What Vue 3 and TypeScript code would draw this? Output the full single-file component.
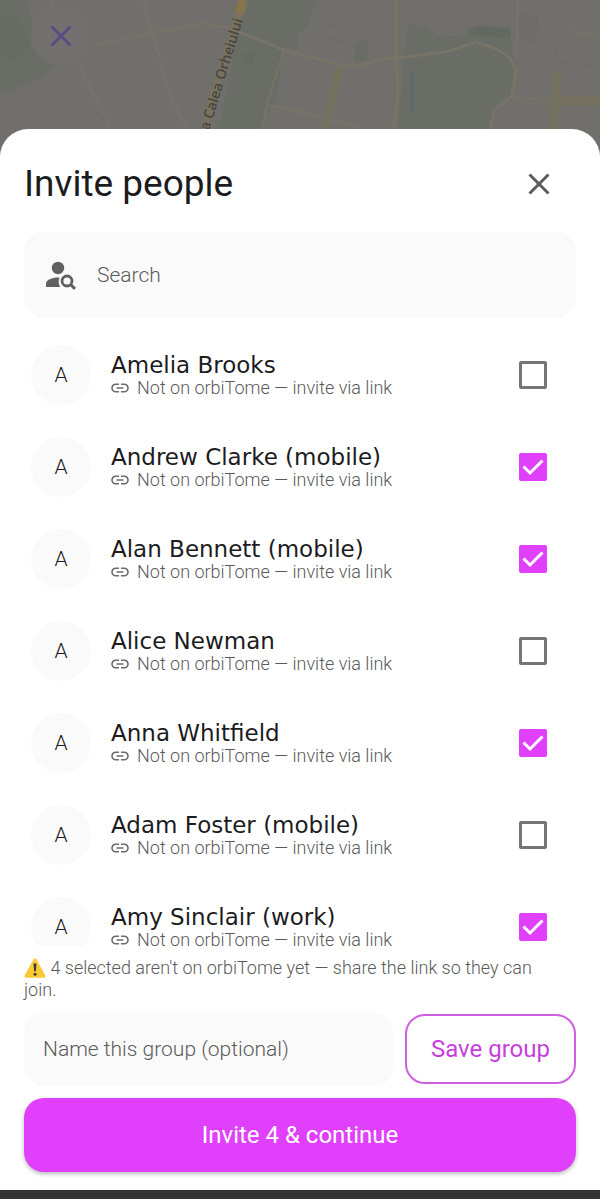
<script setup lang="ts">
import { computed, ref } from 'vue'

interface Contact {
  id: number
  name: string
  selected: boolean
}

const contacts = ref<Contact[]>([
  { id: 1, name: 'Amelia Brooks', selected: false },
  { id: 2, name: 'Andrew Clarke (mobile)', selected: true },
  { id: 3, name: 'Alan Bennett (mobile)', selected: true },
  { id: 4, name: 'Alice Newman', selected: false },
  { id: 5, name: 'Anna Whitfield', selected: true },
  { id: 6, name: 'Adam Foster (mobile)', selected: false },
  { id: 7, name: 'Amy Sinclair (work)', selected: true },
])

const query = ref('')
const groupName = ref('')

const visibleContacts = computed(() =>
  contacts.value.filter((c) => c.name.toLowerCase().includes(query.value.toLowerCase())),
)
const selectedCount = computed(() => contacts.value.filter((c) => c.selected).length)
</script>

<template>
  <div class="screen">
    <div class="map">
      <svg class="map-art" viewBox="0 0 600 170" preserveAspectRatio="xMidYMin slice" aria-hidden="true">
        <rect width="600" height="170" fill="#716f6c" />
        <g fill="#696d66">
          <path d="M0 0H26L32 20L30 42L44 58L60 64L36 80L0 96Z" />
          <path d="M250 0H316L309 24L298 34V50L284 48L276 98L262 124L256 170H212L226 92L238 30Z" />
          <path d="M408 24L422 26L438 35L466 37L470 28L480 25L510 28L512 50L516 66L512 96L496 106L490 130H398L404 60Z" />
          <path d="M356 42L369 40L367 61L354 62Z" />
        </g>
        <path d="M0 14L18 18L30 46L12 60L0 56Z" fill="#676c63" />
        <path d="M467 30L480 26L511 29L510 38L474 36Z" fill="#626960" />
        <path d="M244 54L254 52V64L243 65Z" fill="#646c62" />
        <path d="M520 14L538 16L536 42L520 38Z" fill="#6e6b68" />
        <g fill="none" stroke="#6e6b68" stroke-width="1">
          <path d="M44 92L58 120M62 88L74 122M100 104L106 128M116 96L126 126M132 92L142 124M148 90L156 116" />
          <path d="M312 20L342 28M318 36L346 42M332 6L340 46M540 60L596 66M556 48L560 94" />
        </g>
        <g fill="none" stroke="#777367" stroke-linejoin="round">
          <path d="M52 0L50 10M96 45L142 35L205 23L228 28" stroke-width="2" />
          <path d="M143 0L152 33L172 100L188 130M80 66L110 128" stroke-width="2" />
          <path d="M234 30L284 50L300 54L340 65H360L382 59L405 57L446 52L476 42L497 49L510 58L516 70L512 96L494 110L490 130" stroke-width="3" />
          <path d="M284 50L268 100L262 130M268 105L300 112L358 127" stroke-width="2" />
          <path d="M396 0V60L398 88L394 130" stroke-width="4" />
          <path d="M512 98L600 102M572 31L600 36M518 0L516 60" stroke-width="2" />
        </g>
        <g fill="none" stroke="#74715e">
          <path d="M340 66L334 90L325 128" stroke-width="8" />
          <path d="M557 72L554 130M550 101H600" stroke-width="9" />
          <path d="M243 0L228 48L213 96L204 134" stroke="#79725c" stroke-width="7" />
          <path d="M243 0L239 14" stroke="#86744a" stroke-width="9" />
        </g>
        <path d="M412 72V112" stroke="#5a6970" stroke-width="3" />
        <text class="street" transform="translate(209 131) rotate(-73)" fill="#494742">a Calea Orheiului</text>
      </svg>
      <button class="map-close" type="button" aria-label="Close map">
        <svg width="22" height="22" viewBox="0 0 22 22" aria-hidden="true">
          <path d="M1.500 1.500L20.500 20.500M20.500 1.500L1.500 20.500" stroke="#594c85" stroke-width="3" />
        </svg>
      </button>
    </div>

    <main class="sheet">
      <header class="header">
        <h1>Invite people</h1>
        <button class="icon-button" type="button" aria-label="Close">
          <svg width="22" height="22" viewBox="0 0 22 22" aria-hidden="true">
            <path d="M1.500 1.500L20.500 20.500M20.500 1.500L1.500 20.500" stroke="#5c5c5c" stroke-width="3" />
          </svg>
        </button>
      </header>

      <label class="search">
        <svg width="32" height="30" viewBox="0 0 32 30" aria-hidden="true">
          <circle cx="13" cy="8" r="6.200" fill="#616161" />
          <path d="M1 27V23.600C1 19.600 8 17.200 14.500 17.600C13.200 20.800 13.300 24.400 15.300 27Z" fill="#616161" />
          <circle cx="22" cy="21" r="5" fill="none" stroke="#616161" stroke-width="2.800" />
          <path d="M25.600 24.500L30 28.900" stroke="#616161" stroke-width="3" />
        </svg>
        <input v-model="query" type="text" placeholder="Search" aria-label="Search" />
      </label>

      <ul class="contacts">
        <li v-for="contact in visibleContacts" :key="contact.id">
          <label class="contact">
            <span class="avatar" aria-hidden="true">{{ contact.name.charAt(0) }}</span>
            <span class="details">
              <span class="name">{{ contact.name }}</span>
              <span class="status">
                <svg width="18" height="10" viewBox="0 0 18 10" aria-hidden="true">
                  <path
                    d="M8 1.300H4.700a3.700 3.700 0 0 0 0 7.400H8M10 1.300h3.300a3.700 3.700 0 0 1 0 7.400H10M5.500 5h7"
                    fill="none"
                    stroke="#6b6b6b"
                    stroke-width="1.600"
                  />
                </svg>
                Not on orbiTome — invite via link
              </span>
            </span>
            <span class="tick">
              <input v-model="contact.selected" type="checkbox" />
              <svg width="28" height="28" viewBox="0 0 28 28" aria-hidden="true">
                <path d="M4.500 13.500L11 20L23.500 7.500" fill="none" stroke="#fff" stroke-width="3" />
              </svg>
            </span>
          </label>
        </li>
      </ul>

      <p class="notice">
        <svg class="warning" width="22" height="20" viewBox="0 0 22 20" role="img" aria-label="Warning">
          <path d="M9.600 1.200Q11 -0.600 12.400 1.200L21.400 17.400Q22 19.600 20 19.800H2Q0 19.600 0.600 17.400Z" fill="#fcc934" />
          <path d="M9.500 5.800Q11 4.600 12.500 5.800L11.900 13.200H10.100Z" fill="#3c3c3c" />
          <circle cx="11" cy="16.200" r="1.500" fill="#3c3c3c" />
        </svg>
        {{ selectedCount }} selected aren't on orbiTome yet — share the link so they can join.
      </p>

      <div class="group">
        <input v-model="groupName" type="text" placeholder="Name this group (optional)" aria-label="Name this group (optional)" />
        <button class="save" type="button">Save group</button>
      </div>

      <button class="invite" type="button">Invite {{ selectedCount }} &amp; continue</button>
    </main>
  </div>
</template>

<style>
body {
  margin: 0;
  background: #333;
}
</style>

<style scoped>
.screen {
  display: flex;
  flex-direction: column;
  box-sizing: border-box;
  height: 100vh;
  padding-bottom: 9px;
  position: relative;
  font-family: Roboto, 'Liberation Sans', sans-serif;
  color: #1c1c1e;
  background: #333;
}

.map {
  flex: none;
  height: 170px;
  margin-bottom: -41px;
  position: relative;
}

.map-art {
  display: block;
  width: 100%;
  height: 100%;
}

.street {
  font: 600 14px 'Open Sans', 'Noto Sans', sans-serif;
}

.map-close {
  position: absolute;
  top: 6px;
  left: 31px;
  display: grid;
  place-items: center;
  width: 60px;
  height: 60px;
  padding: 0;
  border: 0;
  border-radius: 50%;
  background: #72706e;
}

.sheet {
  flex: 1;
  min-height: 0;
  display: flex;
  flex-direction: column;
  box-sizing: border-box;
  padding: 25px 24px 18px;
  position: relative;
  border-radius: 28px 28px 0 0;
  background: #fff;
}

.header {
  display: flex;
  align-items: center;
  justify-content: space-between;
  height: 60px;
  margin-bottom: 18px;
}

h1 {
  margin: 0;
  font-size: 37px;
  font-weight: 400;
  line-height: 44px;
}

.icon-button {
  display: grid;
  place-items: center;
  width: 74px;
  height: 60px;
  padding: 0;
  border: 0;
  background: none;
}

.search {
  flex: none;
  display: flex;
  align-items: center;
  gap: 20px;
  height: 86px;
  padding: 0 21px;
  box-sizing: border-box;
  border-radius: 20px;
  background: #fafafa;
}

input[type='text'] {
  flex: 1;
  min-width: 0;
  padding: 0;
  border: 0;
  outline: 0;
  background: none;
  font: 300 21px/26px Roboto, 'Liberation Sans', sans-serif;
  color: #1c1c1e;
}

input[type='text']::placeholder {
  color: #5a5a5a;
  opacity: 1;
}

.contacts {
  flex: 1;
  min-height: 0;
  margin: 11px 0 0;
  padding: 0;
  overflow-y: auto;
  scrollbar-width: none;
  list-style: none;
}

.contact {
  display: flex;
  align-items: center;
  gap: 20px;
  height: 92px;
  padding: 0 29px 0 7px;
}

.avatar {
  flex: none;
  display: grid;
  place-items: center;
  width: 60px;
  height: 60px;
  border-radius: 50%;
  background: #fafafa;
  font-size: 21px;
  font-weight: 300;
}

.details {
  flex: 1;
  min-width: 0;
  display: flex;
  flex-direction: column;
}

.name {
  font: 23px/25px 'DejaVu Sans', sans-serif;
}

.status {
  display: flex;
  align-items: center;
  gap: 8px;
  font-size: 18px;
  font-weight: 300;
  line-height: 20px;
  color: #5a5a5a;
}

.tick {
  flex: none;
  display: grid;
}

.tick > * {
  grid-area: 1 / 1;
}

.tick input {
  appearance: none;
  width: 28px;
  height: 28px;
  margin: 0;
  border: 3px solid #757575;
  border-radius: 2px;
}

.tick input:checked {
  border-color: #e040fb;
  background: #e040fb;
}

.tick svg {
  visibility: hidden;
  pointer-events: none;
}

.tick input:checked + svg {
  visibility: visible;
}

.notice {
  margin: 11px 0;
  padding-right: 16px;
  font-size: 18px;
  font-weight: 300;
  line-height: 22px;
  color: #5a5a5a;
}

.warning {
  height: 20px;
  vertical-align: text-bottom;
}

.group {
  flex: none;
  display: flex;
  align-items: center;
  gap: 12px;
  margin-bottom: 12px;
}

.group input[type='text'] {
  height: 74px;
  padding: 0 19px;
  box-sizing: border-box;
  border-radius: 20px;
  background: #fafafa;
}

.save,
.invite {
  font-family: inherit;
  font-size: 24px;
  font-weight: 400;
  border-radius: 20px;
}

.save {
  height: 70px;
  padding: 0 24px;
  border: 2px solid #cf5fe2;
  background: #fff;
  color: #c63fdd;
}

.invite {
  flex: none;
  height: 74px;
  border: 0;
  background: #e040fb;
  box-shadow: 0 2px 4px rgba(0, 0, 0, 0.28);
  color: #fff;
}
</style>
